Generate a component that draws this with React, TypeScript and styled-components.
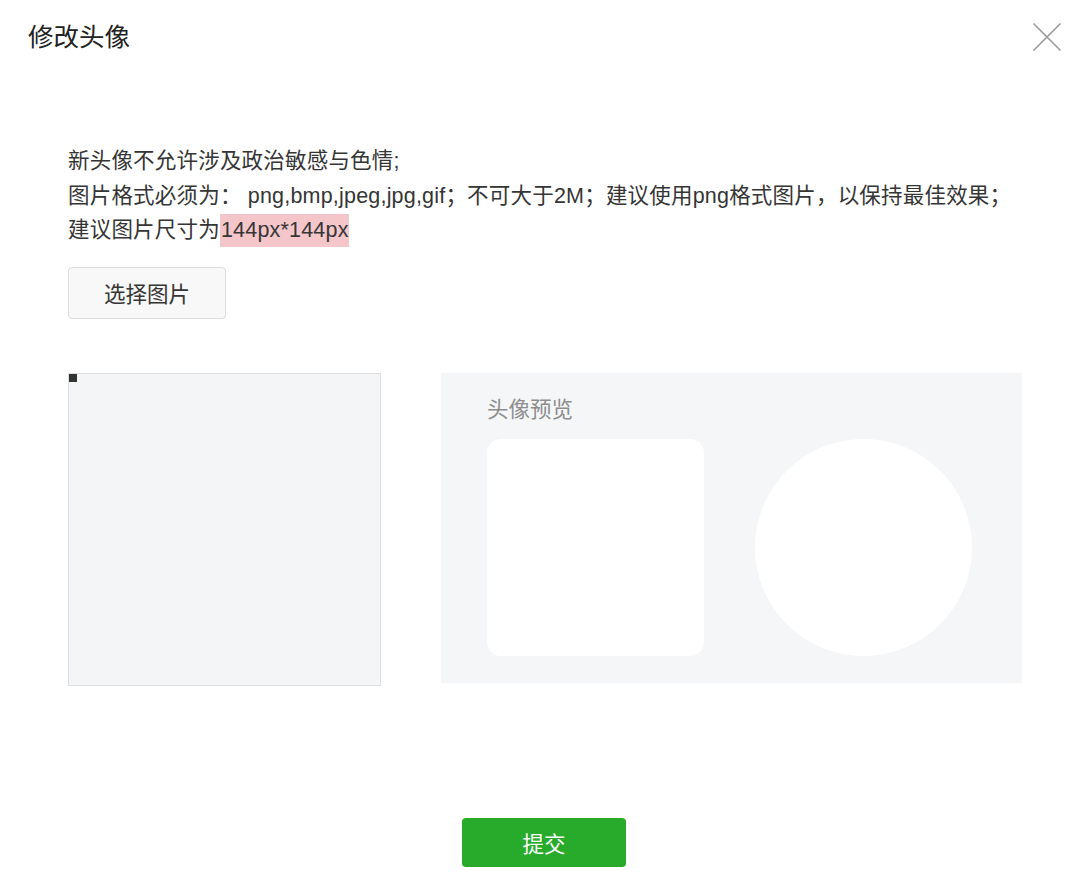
import React from "react";
import styled, { createGlobalStyle } from "styled-components";

const Global = createGlobalStyle`
  html, body { margin: 0; padding: 0; background: #fff; }
  body { font-family: "Liberation Sans", "Noto Sans CJK SC", sans-serif; color: #353535; }
  * { box-sizing: border-box; }
`;

const Dialog = styled.div`
  width: 1080px;
  height: 891px;
  background: #fff;
  display: flex;
  flex-direction: column;
`;

const Header = styled.div`
  height: 74px;
  display: flex;
  align-items: center;
  justify-content: space-between;
  padding: 0 18px 0 28px;
`;

const Title = styled.h1`
  margin: 0;
  font-size: 25.5px;
  font-weight: 400;
  color: #222;
  line-height: 30px;
`;

const CloseButton = styled.button`
  width: 30px;
  height: 30px;
  padding: 0;
  border: none;
  background: transparent;
  display: flex;
  align-items: center;
  justify-content: center;
  cursor: pointer;
`;

const Body = styled.div`
  padding: 70px 40px 0 68px;
  display: flex;
  flex-direction: column;
  align-items: flex-start;
`;

const Notes = styled.div`
  font-size: 21.5px;
  line-height: 34.5px;
  letter-spacing: 0.2px;
  color: #353535;
  white-space: nowrap;
`;

const Highlight = styled.span`
  display: inline-block;
  background: #f4c6c9;
  line-height: 33px;
  height: 33px;
  vertical-align: top;
  margin-top: 1px;
  padding-left: 1px;
`;

const SelectButton = styled.button`
  margin-top: 19px;
  width: 158px;
  height: 52px;
  border: 1px solid #dcdcdc;
  border-radius: 4px;
  background: #f8f8f8;
  font-family: inherit;
  font-size: 21.5px;
  color: #353535;
  cursor: pointer;
`;

const Workspace = styled.div`
  margin-top: 54px;
  display: flex;
  align-items: flex-start;
  gap: 60px;
`;

const CropBox = styled.div`
  position: relative;
  width: 313px;
  height: 313px;
  background: #f4f5f7;
  border: 1px solid #dedfe1;
`;

const Handle = styled.span`
  position: absolute;
  left: 0;
  top: 0;
  width: 8px;
  height: 8px;
  background: #333;
`;

const Preview = styled.div`
  width: 581px;
  height: 310px;
  background: #f5f6f8;
  padding: 26px 46px;
  display: flex;
  flex-direction: column;
  gap: 18px;
`;

const PreviewLabel = styled.div`
  font-size: 21.5px;
  line-height: 22px;
  color: #8d8d8d;
`;

const Thumbs = styled.div`
  display: flex;
  gap: 51px;
`;

const Thumb = styled.div<{ $round?: boolean }>`
  width: 217px;
  height: 217px;
  background: #fff;
  border-radius: ${(p) => (p.$round ? "50%" : "14px")};
`;

const Footer = styled.div`
  margin-top: 132px;
  display: flex;
  justify-content: center;
  padding-left: 8px;
`;

const Submit = styled.button`
  width: 164px;
  height: 49px;
  border: none;
  border-radius: 4px;
  background: #28ab2a;
  color: #fff;
  font-family: inherit;
  font-size: 21.5px;
  cursor: pointer;
`;

export default function App() {
  return (
    <>
      <Global />
      <Dialog>
        <Header>
          <Title>修改头像</Title>
          <CloseButton aria-label="关闭">
            <svg width="30" height="30" viewBox="0 0 30 30">
              <path d="M1.5 1.5 L28.5 28.5 M28.5 1.5 L1.5 28.5" stroke="#9a9a9a" strokeWidth="1.6" fill="none" />
            </svg>
          </CloseButton>
        </Header>
        <Body>
          <Notes>
            <div>新头像不允许涉及政治敏感与色情;</div>
            <div>图片格式必须为：&nbsp;png,bmp,jpeg,jpg,gif；不可大于2M；建议使用png格式图片，以保持最佳效果；</div>
            <div>
              建议图片尺寸为<Highlight>144px*144px</Highlight>
            </div>
          </Notes>
          <SelectButton>选择图片</SelectButton>
          <Workspace>
            <CropBox>
              <Handle />
            </CropBox>
            <Preview>
              <PreviewLabel>头像预览</PreviewLabel>
              <Thumbs>
                <Thumb />
                <Thumb $round />
              </Thumbs>
            </Preview>
          </Workspace>
        </Body>
        <Footer>
          <Submit>提交</Submit>
        </Footer>
      </Dialog>
    </>
  );
}
